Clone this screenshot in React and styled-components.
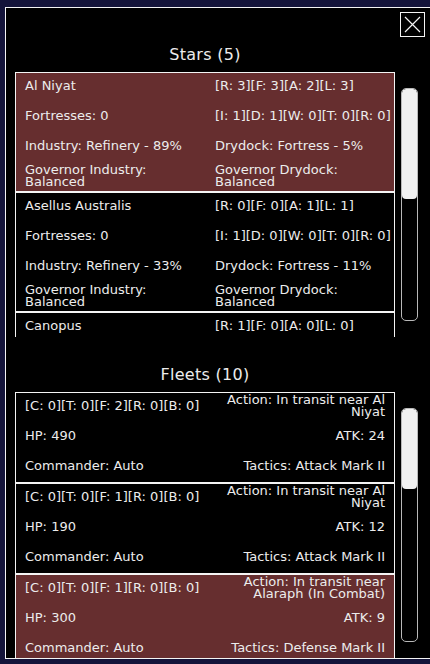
import React from 'react';
import styled, { createGlobalStyle } from 'styled-components';

const COLORS = {
  page: '#14143a',
  panel: '#000000',
  line: '#f4f4f4',
  text: '#ececec',
  selected: '#662e2f',
  thumb: '#f1f1f1',
  track: '#b9b9b9',
};

const STARS = [
  {
    name: 'Al Niyat',
    res: '[R: 3][F: 3][A: 2][L: 3]',
    forts: 'Fortresses: 0',
    build: '[I: 1][D: 1][W: 0][T: 0][R: 0]',
    industry: 'Industry: Refinery - 89%',
    drydock: 'Drydock: Fortress - 5%',
    govIndustry: 'Governor Industry: Balanced',
    govDrydock: 'Governor Drydock: Balanced',
    selected: true,
  },
  {
    name: 'Asellus Australis',
    res: '[R: 0][F: 0][A: 1][L: 1]',
    forts: 'Fortresses: 0',
    build: '[I: 1][D: 0][W: 0][T: 0][R: 0]',
    industry: 'Industry: Refinery - 33%',
    drydock: 'Drydock: Fortress - 11%',
    govIndustry: 'Governor Industry: Balanced',
    govDrydock: 'Governor Drydock: Balanced',
  },
  {
    name: 'Canopus',
    res: '[R: 1][F: 0][A: 0][L: 0]',
    forts: 'Fortresses: 0',
    build: '[I: 0][D: 0][W: 0][T: 0][R: 0]',
    industry: 'Industry: Refinery - 12%',
    drydock: 'Drydock: Fortress - 2%',
    govIndustry: 'Governor Industry: Balanced',
    govDrydock: 'Governor Drydock: Balanced',
  },
];

const FLEETS = [
  {
    ships: '[C: 0][T: 0][F: 2][R: 0][B: 0]',
    action: 'Action: In transit near Al Niyat',
    hp: 'HP: 490',
    atk: 'ATK: 24',
    commander: 'Commander: Auto',
    tactics: 'Tactics: Attack Mark II',
  },
  {
    ships: '[C: 0][T: 0][F: 1][R: 0][B: 0]',
    action: 'Action: In transit near Al Niyat',
    hp: 'HP: 190',
    atk: 'ATK: 12',
    commander: 'Commander: Auto',
    tactics: 'Tactics: Attack Mark II',
  },
  {
    ships: '[C: 0][T: 0][F: 1][R: 0][B: 0]',
    action: 'Action: In transit near Alaraph (In Combat)',
    hp: 'HP: 300',
    atk: 'ATK: 9',
    commander: 'Commander: Auto',
    tactics: 'Tactics: Defense Mark II',
    selected: true,
  },
];

const GlobalStyle = createGlobalStyle`
  html, body {
    margin: 0;
    background: ${COLORS.page};
    overflow: hidden;
  }
  body {
    font-family: "DejaVu Sans", "Liberation Sans", sans-serif;
    color: ${COLORS.text};
  }
`;

const Screen = styled.div`
  width: 430px;
  height: 664px;
  padding: 7px 0 0 5px;
  box-sizing: border-box;
  overflow: hidden;
`;

const Panel = styled.div`
  position: relative;
  width: 440px;
  height: 652px;
  box-sizing: border-box;
  border: 1px solid ${COLORS.line};
  background: ${COLORS.panel};
  display: flex;
  flex-direction: column;
  padding: 37px 0 0 9px;
`;

const CloseButton = styled.button`
  position: absolute;
  top: 4px;
  left: 394px;
  width: 25px;
  height: 25px;
  padding: 0;
  border: 1px solid ${COLORS.line};
  background: transparent;
  display: flex;
  align-items: center;
  justify-content: center;
  cursor: pointer;
`;

const Title = styled.h2`
  margin: 0;
  width: 380px;
  height: 20px;
  font-size: 16px;
  line-height: 20px;
  font-weight: normal;
  text-align: center;
  letter-spacing: 0.3px;
`;

const Section = styled.section`
  display: flex;
  flex-direction: column;
  gap: 7px;
  margin-bottom: ${(p) => p.$gap || 0}px;
  flex: ${(p) => (p.$grow ? '1' : 'none')};
  min-height: 0;
`;

const ListArea = styled.div`
  display: flex;
  gap: 6px;
  height: ${(p) => (p.$height ? p.$height + 'px' : 'auto')};
  flex: ${(p) => (p.$height ? 'none' : '1')};
  min-height: 0;
`;

const List = styled.div`
  width: 380px;
  overflow: hidden;
  display: flex;
  flex-direction: column;
`;

const Track = styled.div`
  width: 17px;
  margin: 16px 0;
  box-sizing: border-box;
  border: 1px solid ${COLORS.track};
  border-radius: 5px;
  overflow: hidden;
`;

const Thumb = styled.div`
  height: ${(p) => p.$size}px;
  background: ${COLORS.thumb};
  border-radius: 4px;
`;

const Row = styled.div`
  flex: none;
  display: grid;
  grid-template-columns: ${(p) => p.$cols};
  grid-auto-rows: 25px;
  row-gap: 5px;
  align-items: center;
  padding: 0 9px ${(p) => p.$bottom}px;
  border: 1px solid ${COLORS.line};
  background: ${(p) => (p.$selected ? COLORS.selected : 'transparent')};
  font-size: 13px;
  line-height: 12px;
`;

const Cell = styled.div`
  text-align: ${(p) => (p.$right ? 'right' : 'left')};
  white-space: ${(p) => (p.$wrap ? 'normal' : 'nowrap')};
  padding-right: ${(p) => (p.$wrap && !p.$right ? 10 : 0)}px;
`;

const CloseIcon = () => (
  <svg width="17" height="17" viewBox="0 0 17 17">
    <path d="M1 1 L16 16 M16 1 L1 16" stroke={COLORS.line} strokeWidth="1.2" />
  </svg>
);

const ScrollBar = ({ thumb }) => (
  <Track>
    <Thumb $size={thumb} />
  </Track>
);

const StarRow = ({ star }) => (
  <Row $cols="190px 1fr" $bottom={3} $selected={star.selected}>
    <Cell>{star.name}</Cell>
    <Cell>{star.res}</Cell>
    <Cell>{star.forts}</Cell>
    <Cell>{star.build}</Cell>
    <Cell>{star.industry}</Cell>
    <Cell>{star.drydock}</Cell>
    <Cell $wrap>{star.govIndustry}</Cell>
    <Cell $wrap>{star.govDrydock}</Cell>
  </Row>
);

const FleetRow = ({ fleet }) => (
  <Row $cols="190px 170px" $bottom={4} $selected={fleet.selected}>
    <Cell>{fleet.ships}</Cell>
    <Cell $right $wrap>{fleet.action}</Cell>
    <Cell>{fleet.hp}</Cell>
    <Cell $right>{fleet.atk}</Cell>
    <Cell>{fleet.commander}</Cell>
    <Cell $right>{fleet.tactics}</Cell>
  </Row>
);

export default function App() {
  return (
    <Screen>
      <GlobalStyle />
      <Panel>
        <CloseButton aria-label="Close">
          <CloseIcon />
        </CloseButton>

        <Section $gap={28}>
          <Title>Stars (5)</Title>
          <ListArea $height={265}>
            <List>
              {STARS.map((s) => (
                <StarRow key={s.name} star={s} />
              ))}
            </List>
            <ScrollBar thumb={110} />
          </ListArea>
        </Section>

        <Section $grow>
          <Title>Fleets (10)</Title>
          <ListArea>
            <List>
              {FLEETS.map((f, i) => (
                <FleetRow key={i} fleet={f} />
              ))}
            </List>
            <ScrollBar thumb={80} />
          </ListArea>
        </Section>
      </Panel>
    </Screen>
  );
}
